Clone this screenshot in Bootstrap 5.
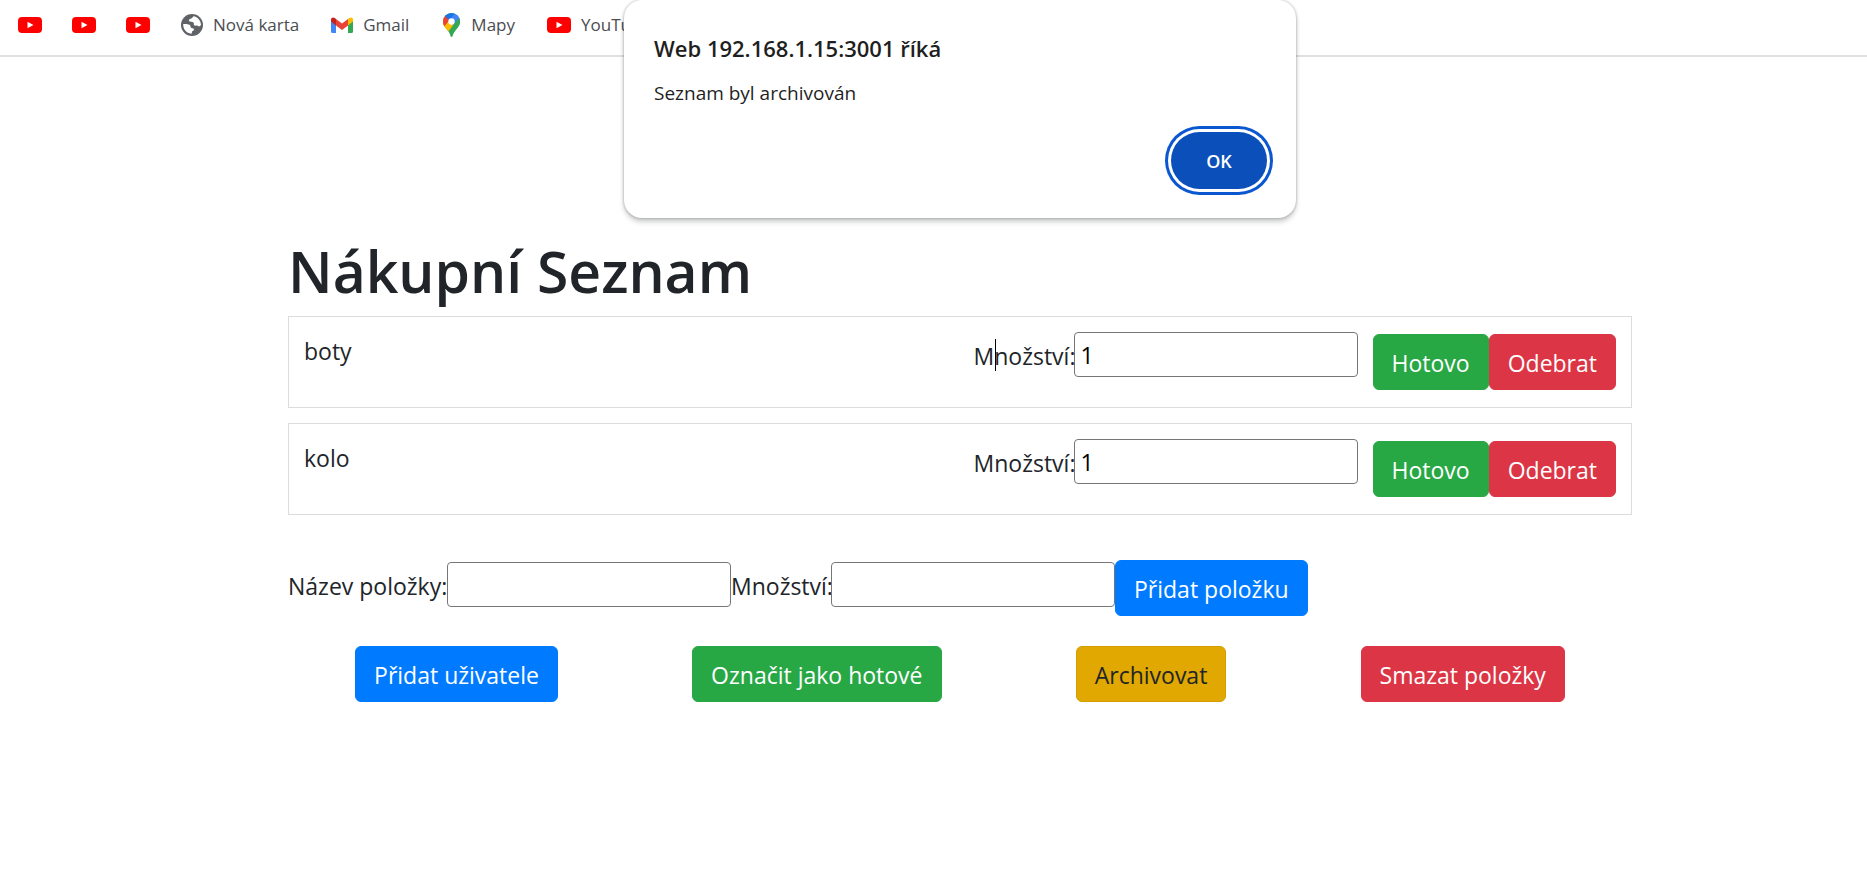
<!DOCTYPE html>
<html lang="cs">
<head>
<meta charset="utf-8">
<meta name="viewport" content="width=device-width, initial-scale=1">
<title>Nákupní Seznam</title>
<link rel="stylesheet" href="https://cdn.jsdelivr.net/npm/bootstrap@5.3.0/dist/css/bootstrap.min.css">
<style>
  body { font-family: "Open Sans", sans-serif; font-size: 23px; line-height: 36px; color: #212529; background: #fff; }
  .bookmarks { height: 57px; padding: 0 18px 6px; gap: 30px; border-bottom: 2px solid #e0e0e0; font-size: 17px; line-height: 24px; }
  .bookmarks a { color: #4a4d51; gap: 10px; }
  .bookmarks .site-link { padding: 0 1px; }
  .page-frame { padding-left: 288px; padding-right: 235px; }
  .dialog-layer { position: absolute; top: 0; left: 0; right: 0; z-index: 5; }
  .alert-box { width: 672px; padding: 31px 29px 29px 30px; border: 0; border-radius: 18px; background: #fff; box-shadow: 0 0 3px rgba(0,0,0,.3), 0 4px 5px rgba(60,70,65,.26); }
  .alert-box h2 { font-size: 22px; line-height: 34px; font-weight: 600; color: #1f1f1f; margin: 0 0 14px; }
  .alert-box p { font-size: 19px; line-height: 28px; color: #1f1f1f; margin: 0 0 25px; }
  .ok-btn { width: 96px; height: 57px; border: 0; border-radius: 29px; background: #0b50ba; color: #fff; font-size: 18px; font-weight: 600; box-shadow: 0 0 0 3px #fff, 0 0 0 6px #0b57d0; }
  main { padding-top: 178px; }
  h1 { font-size: 57px; line-height: 72px; font-weight: 600; margin: 0 0 9px; }
  .shop-item { border: 1px solid #dcdcdc; padding: 15px; height: 92px; margin-bottom: 15px; }
  .shop-item .btn { margin-top: 2px; }
  .item-name { padding-top: 1px; }
  .shop-field { width: 284px; height: 45px; border: 1px solid #767676; border-radius: 4px; padding: 2px 6px; color: #000; background: #fff; }
  .item-field { margin-right: 15px; }
  .qty-label { width: 100px; }
  .name-label { width: 159px; }
  .qty-label, .name-label { padding-top: 6px; white-space: nowrap; }
  .add-row { margin: 45px 0 30px; }
  .add-row label { padding-top: 8px; }
  .add-row .shop-field { margin-top: 2px; }
  .btn { --bs-btn-font-size: 23px; --bs-btn-line-height: 36px; --bs-btn-padding-x: 18px; --bs-btn-border-radius: 6px; padding-top: 10px; padding-bottom: 8px; white-space: nowrap; }
  .btn-primary { --bs-btn-bg: #007bff; --bs-btn-border-color: #007bff; }
  .btn-success { --bs-btn-bg: #28a745; --bs-btn-border-color: #28a745; }
  .btn-danger { --bs-btn-bg: #dc3545; --bs-btn-border-color: #dc3545; }
  .btn-warning { --bs-btn-bg: #e0a800; --bs-btn-border-color: #d39e00; --bs-btn-color: #212529; }
  .text-caret { position: absolute; left: 21px; top: 7px; width: 1px; height: 32px; background: #000; }
</style>
</head>
<body>
<svg class="d-none">
  <symbol id="yt" viewBox="0 0 24 16"><rect width="24" height="16" rx="4" fill="#f00"/><path d="M9.500 4.700v6.600L15.500 8z" fill="#fff"/></symbol>
</svg>

<nav class="bookmarks d-flex align-items-center overflow-hidden" aria-label="Záložky">
  <a href="#" class="d-flex" aria-label="YouTube"><svg width="24" height="16"><use href="#yt"/></svg></a>
  <a href="#" class="d-flex" aria-label="YouTube"><svg width="24" height="16"><use href="#yt"/></svg></a>
  <a href="#" class="d-flex" aria-label="YouTube"><svg width="24" height="16"><use href="#yt"/></svg></a>
  <a href="#" class="site-link d-flex align-items-center text-decoration-none">
    <svg width="22" height="22" viewBox="0 0 22 22"><circle cx="11" cy="11" r="11" fill="#5f6368"/><path d="M12.500 2.200c-1 .9-1 2-2.500 2.300-1.500.3-2.500 1.500-2 2.500.6 1.200 3.600.5 4.500 1.500.8 1-.3 2.500 1 3 1.500.5 2.500-.5 3.500.5 1.200 1.200 2.500-.5 3-1 0-4.500-3.500-8.300-7.500-8.800zM2.200 10c2 0 4.800-.2 6.300.8 1.500 1 .5 2.700 2 3.200 1.300.5 2.500 0 2.500 1.500s-1.500 1-2 2.200c-.4.900.2 1.600-.8 2C5.500 19.200 1.800 15 2.200 10z" fill="#fff"/></svg>
    <span>Nová karta</span></a>
  <a href="#" class="site-link d-flex align-items-center text-decoration-none">
    <svg width="22" height="16" viewBox="0 0 22 16"><path d="M0 3h5v13H1.500A1.500 1.500 0 0 1 0 14.500z" fill="#4285f4"/><path d="M17 3h5v11.500a1.500 1.500 0 0 1-1.500 1.500H17z" fill="#34a853"/><path d="M17 2l1.200-1C19.800-.3 22 .7 22 2.500v2L17 8.500z" fill="#fbbc04"/><path d="M5 2l6 4.500L17 2v6.500L11 13 5 8.500z" fill="#ea4335"/><path d="M5 2L3.800 1C2.200-.3 0 .7 0 2.500v2l5 4z" fill="#c5221f"/></svg>
    <span>Gmail</span></a>
  <a href="#" class="site-link d-flex align-items-center text-decoration-none">
    <svg width="20" height="24" viewBox="-2 0 20 24"><defs><clipPath id="pin"><path d="M8.500 0A8.500 8.500 0 0 0 0 8.800c0 3 1.500 4.800 3.500 7.200C6 19 7 20.500 7.500 23c.3 1.300 1.700 1.300 2 0 .5-2.500 1.500-4 4-7 2-2.400 3.500-4.200 3.500-7.200A8.500 8.500 0 0 0 8.500 0z"/></clipPath></defs><g clip-path="url(#pin)"><path d="M0 0h18v24H0z" fill="#34a853"/><path d="M0 9l4-1 8.500 4-9 6H0z" fill="#fbbc04"/><path d="M11.500 11l-8 9.500H-1V12l7-4z" fill="#fbbc04"/><path d="M-1 11.500V3l3-1 5 4.500-5.800 7z" fill="#ea4335"/><path d="M2 3L8 9l6-10H2z" fill="#1a73e8"/><path d="M6 8l6-8 6 3v4l-8 5z" fill="#4285f4"/><path d="M11 11l5.500-6.500L19 10l-7 14-5-3 1-6z" fill="#34a853"/></g><circle cx="8.500" cy="8.500" r="3.200" fill="#fff"/></svg>
    <span>Mapy</span></a>
  <a href="#" class="site-link d-flex align-items-center text-decoration-none"><svg width="24" height="16"><use href="#yt"/></svg><span>YouTube</span></a>
</nav>

<div class="dialog-layer page-frame d-flex justify-content-center">
  <section class="alert-box" role="alertdialog" aria-labelledby="dlg-title" aria-describedby="dlg-text">
    <h2 id="dlg-title">Web 192.168.1.15:3001 říká</h2>
    <p id="dlg-text">Seznam byl archivován</p>
    <div class="d-flex justify-content-end"><button type="button" class="ok-btn">OK</button></div>
  </section>
</div>

<main class="page-frame">
  <h1>Nákupní Seznam</h1>
  <div class="shop-item d-flex justify-content-between">
    <span class="item-name">boty</span>
    <div class="d-flex align-items-start">
      <label class="qty-label position-relative" for="qty1">Množství:<span class="text-caret"></span></label>
      <input class="shop-field item-field" id="qty1" type="text" inputmode="numeric" value="1">
      <button type="button" class="btn btn-success">Hotovo</button>
      <button type="button" class="btn btn-danger">Odebrat</button>
    </div>
  </div>
  <div class="shop-item d-flex justify-content-between">
    <span class="item-name">kolo</span>
    <div class="d-flex align-items-start">
      <label class="qty-label" for="qty2">Množství:</label>
      <input class="shop-field item-field" id="qty2" type="text" inputmode="numeric" value="1">
      <button type="button" class="btn btn-success">Hotovo</button>
      <button type="button" class="btn btn-danger">Odebrat</button>
    </div>
  </div>
  <form class="add-row d-flex align-items-start">
    <label class="name-label" for="new-name">Název položky:</label>
    <input class="shop-field" id="new-name" type="text">
    <label class="qty-label" for="new-qty">Množství:</label>
    <input class="shop-field" id="new-qty" type="text">
    <button type="button" class="btn btn-primary">Přidat položku</button>
  </form>
  <div class="actions d-flex justify-content-around">
    <button type="button" class="btn btn-primary">Přidat uživatele</button>
    <button type="button" class="btn btn-success">Označit jako hotové</button>
    <button type="button" class="btn btn-warning">Archivovat</button>
    <button type="button" class="btn btn-danger">Smazat položky</button>
  </div>
</main>
<script src="https://cdn.jsdelivr.net/npm/bootstrap@5.3.0/dist/js/bootstrap.bundle.min.js"></script>
</body>
</html>
